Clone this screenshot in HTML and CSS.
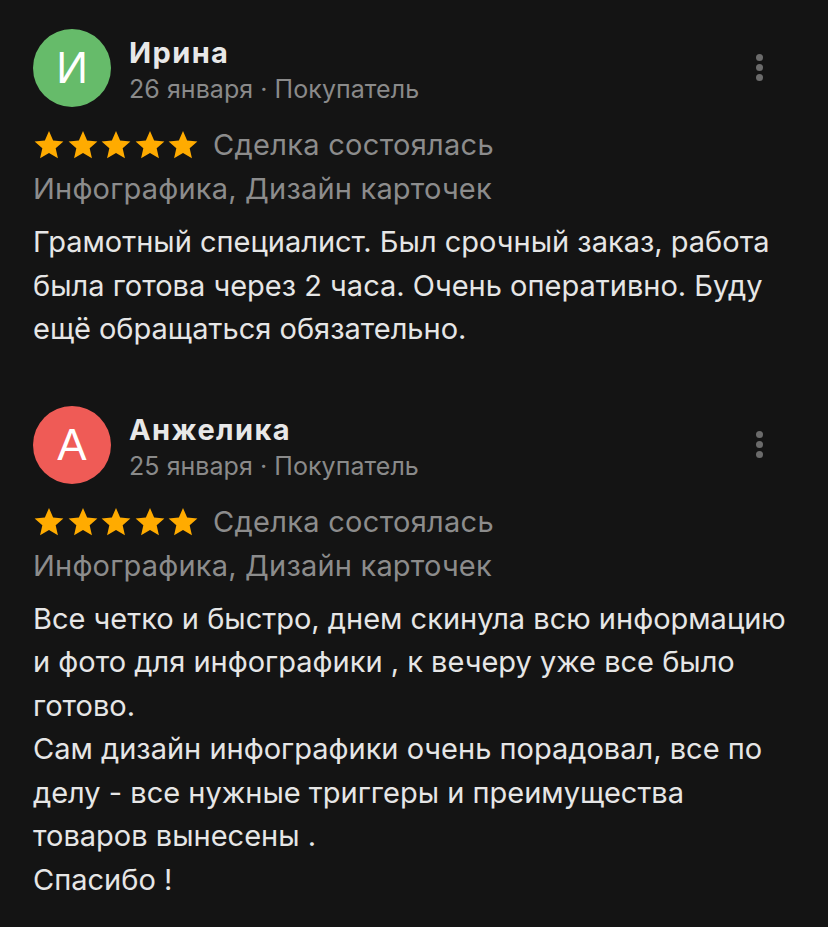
FILE: index.html
```html
<!DOCTYPE html>
<html lang="ru">
<head>
<meta charset="utf-8">
<link rel="stylesheet" href="styles.css">
</head>
<body>
<div class="list">
  <div class="review">
    <div class="head">
      <div class="avatar green">И</div>
      <div class="who">
        <div class="name">Ирина</div>
        <div class="meta">26 января · Покупатель</div>
      </div>
      <div class="more"><span></span><span></span><span></span></div>
    </div>
    <div class="rating">
      <div class="stars">
        <svg viewBox="0 0 24 24"><path d="M12 1.5l3.1 7.1 7.7.7-5.8 5.1 1.7 7.6L12 18l-6.7 4 1.7-7.6-5.8-5.1 7.7-.7z"/></svg>
        <svg viewBox="0 0 24 24"><path d="M12 1.5l3.1 7.1 7.7.7-5.8 5.1 1.7 7.6L12 18l-6.7 4 1.7-7.6-5.8-5.1 7.7-.7z"/></svg>
        <svg viewBox="0 0 24 24"><path d="M12 1.5l3.1 7.1 7.7.7-5.8 5.1 1.7 7.6L12 18l-6.7 4 1.7-7.6-5.8-5.1 7.7-.7z"/></svg>
        <svg viewBox="0 0 24 24"><path d="M12 1.5l3.1 7.1 7.7.7-5.8 5.1 1.7 7.6L12 18l-6.7 4 1.7-7.6-5.8-5.1 7.7-.7z"/></svg>
        <svg viewBox="0 0 24 24"><path d="M12 1.5l3.1 7.1 7.7.7-5.8 5.1 1.7 7.6L12 18l-6.7 4 1.7-7.6-5.8-5.1 7.7-.7z"/></svg>
      </div>
      <span class="deal">Сделка состоялась</span>
    </div>
    <div class="tags">Инфографика, Дизайн карточек</div>
    <div class="text">Грамотный специалист. Был срочный заказ, работа<br>была готова через 2 часа. Очень оперативно. Буду<br>ещё обращаться обязательно.</div>
  </div>
  <div class="review">
    <div class="head">
      <div class="avatar red">А</div>
      <div class="who">
        <div class="name">Анжелика</div>
        <div class="meta">25 января · Покупатель</div>
      </div>
      <div class="more"><span></span><span></span><span></span></div>
    </div>
    <div class="rating">
      <div class="stars">
        <svg viewBox="0 0 24 24"><path d="M12 1.5l3.1 7.1 7.7.7-5.8 5.1 1.7 7.6L12 18l-6.7 4 1.7-7.6-5.8-5.1 7.7-.7z"/></svg>
        <svg viewBox="0 0 24 24"><path d="M12 1.5l3.1 7.1 7.7.7-5.8 5.1 1.7 7.6L12 18l-6.7 4 1.7-7.6-5.8-5.1 7.7-.7z"/></svg>
        <svg viewBox="0 0 24 24"><path d="M12 1.5l3.1 7.1 7.7.7-5.8 5.1 1.7 7.6L12 18l-6.7 4 1.7-7.6-5.8-5.1 7.7-.7z"/></svg>
        <svg viewBox="0 0 24 24"><path d="M12 1.5l3.1 7.1 7.7.7-5.8 5.1 1.7 7.6L12 18l-6.7 4 1.7-7.6-5.8-5.1 7.7-.7z"/></svg>
        <svg viewBox="0 0 24 24"><path d="M12 1.5l3.1 7.1 7.7.7-5.8 5.1 1.7 7.6L12 18l-6.7 4 1.7-7.6-5.8-5.1 7.7-.7z"/></svg>
      </div>
      <span class="deal">Сделка состоялась</span>
    </div>
    <div class="tags">Инфографика, Дизайн карточек</div>
    <div class="text">Все четко и быстро, днем скинула всю информацию<br>и фото для инфографики , к вечеру уже все было<br>готово.<br>Сам дизайн инфографики очень порадовал, все по<br>делу - все нужные триггеры и преимущества<br>товаров вынесены .<br>Спасибо !</div>
  </div>
</div>
</body>
</html>
```
FILE: styles.css
```css
html, body {
  margin: 0;
  padding: 0;
  background: #141414;
}
body {
  font-family: Inter, "Noto Sans", sans-serif;
  color: #e6e6e6;
}
.list {
  padding: 29px 0 0 33px;
  width: 795px;
  box-sizing: border-box;
  display: flex;
  flex-direction: column;
  gap: 55px;
}
.review {
  display: flex;
  flex-direction: column;
}
.head {
  display: flex;
  align-items: flex-start;
  gap: 18px;
  height: 78px;
}
.avatar {
  width: 78px;
  height: 78px;
  border-radius: 50%;
  display: flex;
  align-items: center;
  justify-content: center;
  color: #fff;
  font-family: "Liberation Sans", sans-serif;
  font-size: 44px;
  font-weight: 400;
  flex: none;
}
.green { background: #66bb6a; }
.red { background: #ef5b56; }
.who {
  flex: 1;
  display: flex;
  flex-direction: column;
  padding-top: 6px;
}
.name {
  font-size: 29px;
  font-weight: 700;
  color: #e8e8e8;
  line-height: 36px;
  letter-spacing: 1.4px;
}
.meta {
  font-size: 25px;
  color: #8a8a8a;
  line-height: 36px;
  letter-spacing: 0.05px;
}
.more {
  display: flex;
  flex-direction: column;
  gap: 3px;
  margin-right: 32px;
  margin-top: 25px;
}
.more span {
  width: 7px;
  height: 7px;
  border-radius: 50%;
  background: #6b6b6b;
}
.rating {
  display: flex;
  align-items: center;
  gap: 14px;
  margin-top: 16px;
  height: 44px;
}
.stars {
  display: flex;
  gap: 1.5px;
}
.stars svg {
  width: 32px;
  height: 32px;
  fill: #ffab00;
}
.deal {
  font-size: 29px;
  color: #8c8c8c;
  line-height: 44px;
  letter-spacing: 0.3px;
}
.tags {
  font-size: 29px;
  color: #8c8c8c;
  line-height: 44px;
  letter-spacing: 0.2px;
}
.text {
  font-size: 29px;
  line-height: 43.5px;
  color: #e6e6e6;
  margin-top: 9px;
}
```
